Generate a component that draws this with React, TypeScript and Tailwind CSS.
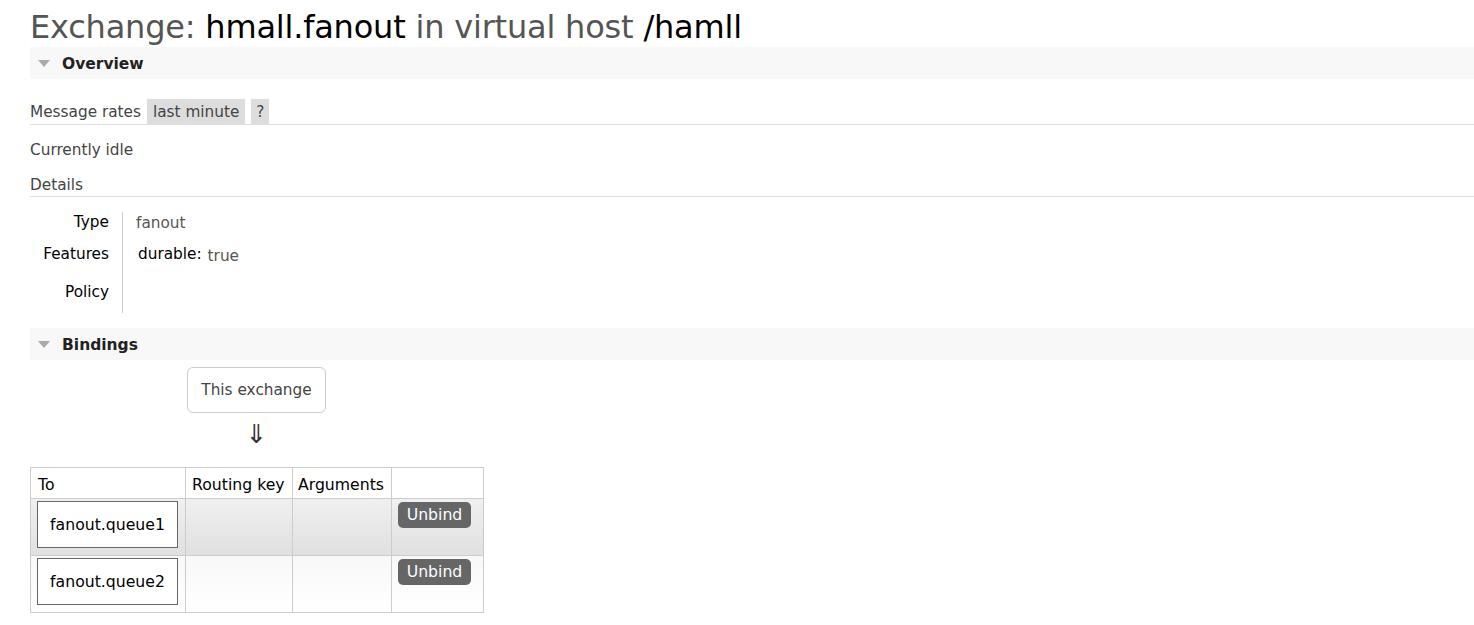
import React from "react";

const font = { fontFamily: '"DejaVu Sans", Verdana, sans-serif' };

function SectionHeader({ title }: { title: string }) {
  return (
    <div className="flex h-[32px] items-center bg-[#f8f8f8] pt-[1px]">
      <svg width="12" height="7" viewBox="0 0 12 7" className="ml-[8px] mr-[12px]">
        <polygon points="0,0 12,0 6,7" fill="#aaaaaa" />
      </svg>
      <span className="text-[15.5px] font-bold text-[#222]">{title}</span>
    </div>
  );
}

export default function App() {
  return (
    <div className="min-h-[625px] bg-white pl-[30px] text-[15.3px] leading-[20px] text-[#444]" style={font}>
      <h1 className="h-[47px] pt-[8px] text-[32px] leading-[38px] tracking-[-0.2px] text-[#555]">
        Exchange: <span className="text-black">hmall.fanout</span> in virtual host{" "}
        <span className="text-black">/hamll</span>
      </h1>
      <SectionHeader title="Overview" />

      <div className="mt-[20px] flex h-[26px] items-start border-b border-[#ddd]">
        <span className="mr-[6px] flex h-[25px] items-center">Message rates</span>
        <span className="flex h-[25px] items-center bg-[#ddd] px-[6px]">last minute</span>
        <span className="ml-[6px] flex h-[25px] items-center bg-[#ddd] px-[5px]">?</span>
      </div>

      <div className="mt-[15px] h-[20px]">Currently idle</div>
      <div className="mt-[15px] h-[22px] border-b border-[#ddd]">Details</div>

      <div className="mt-[15px] flex">
        <div className="flex w-[93px] flex-col items-end border-r border-[#ccc] pr-[13px] text-black">
          <div className="h-[32px]">Type</div>
          <div className="h-[38px]">Features</div>
          <div className="h-[31px]">Policy</div>
        </div>
        <div className="flex flex-col pl-[13px]">
          <div className="h-[32px] pt-[1px] text-[#555]">fanout</div>
          <div className="flex h-[38px] items-start pl-[2px]">
            <span className="text-black">durable:</span>
            <span className="ml-[6px] mt-[2px] text-[#555]">true</span>
          </div>
        </div>
      </div>

      <div className="mt-[15px]">
        <SectionHeader title="Bindings" />
      </div>

      <div className="ml-[157px] mt-[7px] flex w-[139px] flex-col items-center">
        <div className="flex h-[46px] w-[139px] items-center justify-center rounded-[6px] border border-[#ccc] text-[#444]">
          This exchange
        </div>
        <div className="mt-[6px] h-[30px] text-[26px] leading-[30px] text-[#333]">⇓</div>
      </div>

      <table className="mt-[18px] w-[453px] table-fixed border-collapse whitespace-nowrap text-[15.7px] leading-[20px] text-black">
        <colgroup>
          <col className="w-[155px]" />
          <col className="w-[107px]" />
          <col className="w-[99px]" />
          <col className="w-[92px]" />
        </colgroup>
        <thead>
          <tr className="h-[31px]">
            <th className="border border-[#ccc] px-[7px] pt-[3px] text-left font-normal">To</th>
            <th className="border border-[#ccc] px-[6px] pt-[3px] text-left font-normal">Routing key</th>
            <th className="border border-[#ccc] px-[5px] pt-[3px] text-left font-normal">Arguments</th>
            <th className="border border-[#ccc]"></th>
          </tr>
        </thead>
        <tbody>
          {["fanout.queue1", "fanout.queue2"].map((q, i) => (
            <tr
              key={q}
              className={
                i === 0
                  ? "h-[57px] bg-gradient-to-b from-[#f0f0f0] to-[#e0e0e0]"
                  : "h-[57px] bg-gradient-to-b from-[#f8f8f8] to-white"
              }
            >
              <td className="border border-[#ccc] p-0 pl-[6px] pt-[2px] align-top">
                <div className="flex h-[47px] w-[141px] items-center justify-center border border-[#666] bg-white">
                  {q}
                </div>
              </td>
              <td className="border border-[#ccc]"></td>
              <td className="border border-[#ccc]"></td>
              <td className="border border-[#ccc] p-0 pl-[6px] pt-[3px] align-top">
                <div className="flex h-[26px] w-[73px] items-center justify-center rounded-[5px] bg-[#666] text-white">
                  Unbind
                </div>
              </td>
            </tr>
          ))}
        </tbody>
      </table>
    </div>
  );
}
